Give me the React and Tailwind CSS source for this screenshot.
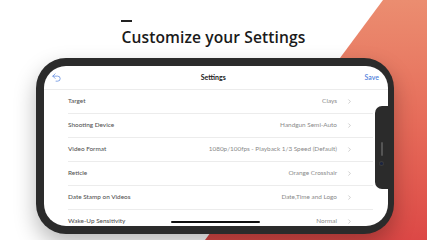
import { ChevronRight, Undo2 } from 'lucide-react';

const rows = [
  { label: 'Target', value: 'Clays' },
  { label: 'Shooting Device', value: 'Handgun Semi-Auto' },
  { label: 'Video Format', value: '1080p/100fps - Playback 1/3 Speed (Default)' },
  { label: 'Reticle', value: 'Orange Crosshair' },
  { label: 'Date Stamp on Videos', value: 'Date,Time and Logo' },
  { label: 'Wake-Up Sensitivity', value: 'Normal' },
];

function Row({ label, value }) {
  return (
    <div className="flex h-[24px] shrink-0 items-center border-b border-[#ececec] pr-[20px] text-[6.4px]">
      <span className="flex-1 font-medium text-[#555]">{label}</span>
      <span className="text-[#8a8a8a]">{value}</span>
      <ChevronRight className="ml-[9px] h-[7px] w-[7px] text-[#9a9a9a]" strokeWidth={1.6} />
    </div>
  );
}

export default function App() {
  return (
    <div className="relative h-[240px] w-[427px] overflow-hidden bg-white" style={{ fontFamily: 'Lato, "Noto Sans", sans-serif' }}>
      {/* diagonal backdrop */}
      <div className="absolute inset-0 bg-gradient-to-b from-[#eb8d70] via-[#e66c5a] to-[#dc4846] [clip-path:polygon(383px_0,427px_0,427px_240px,205px_240px)]" />

      <div className="relative flex flex-col">
        <div className="mx-auto mt-[20px] flex w-fit flex-col">
          <div className="h-[1.5px] w-[11px] bg-[#222]" />
          <h1
            className="mt-[5px] text-[15.6px] font-semibold leading-[21px] tracking-[0.1px] text-[#1a1a1a]"
            style={{ fontFamily: '"Open Sans", sans-serif' }}
          >
            Customize your Settings
          </h1>
        </div>

        <div className="ml-[36px] mt-[10px] h-[176px] w-[358px] rounded-[30px] bg-[#2b2b2b] py-[8px] pl-[8px] pr-[6px] shadow-[0_10px_22px_rgba(0,0,0,0.28)]">
          <div className="relative flex h-full flex-col overflow-hidden rounded-[22px] bg-white">
            <div className="flex h-[24px] shrink-0 items-center border-b border-[#ececec] px-[7px]">
              <Undo2 className="h-[11px] w-[11px] text-[#4f7fdc]" strokeWidth={1.5} />
              <span className="flex-1 text-center text-[7px] font-bold text-[#222]">Settings</span>
              <span className="mr-[2px] text-[7px] font-semibold text-[#4f7fdc]">Save</span>
            </div>
            <div className="flex flex-col pl-[24px] pr-[15px]">
              {rows.map((r) => (
                <Row key={r.label} {...r} />
              ))}
            </div>

            {/* notch */}
            <div className="absolute right-0 top-[40px] flex h-[83px] w-[13px] flex-col items-center rounded-l-[7px] bg-[#2b2b2b] pt-[36px]">
              <div className="h-[14px] w-[2px] rounded-full bg-[#555]" />
              <div className="mt-[6px] h-[3px] w-[3px] rounded-full bg-[#1b2440] ring-1 ring-[#3a3a3a]" />
            </div>

            {/* home indicator */}
            <div className="absolute bottom-[3px] left-[127px] h-[1.5px] w-[89px] rounded-full bg-[#111]" />
          </div>
        </div>
      </div>
    </div>
  );
}
